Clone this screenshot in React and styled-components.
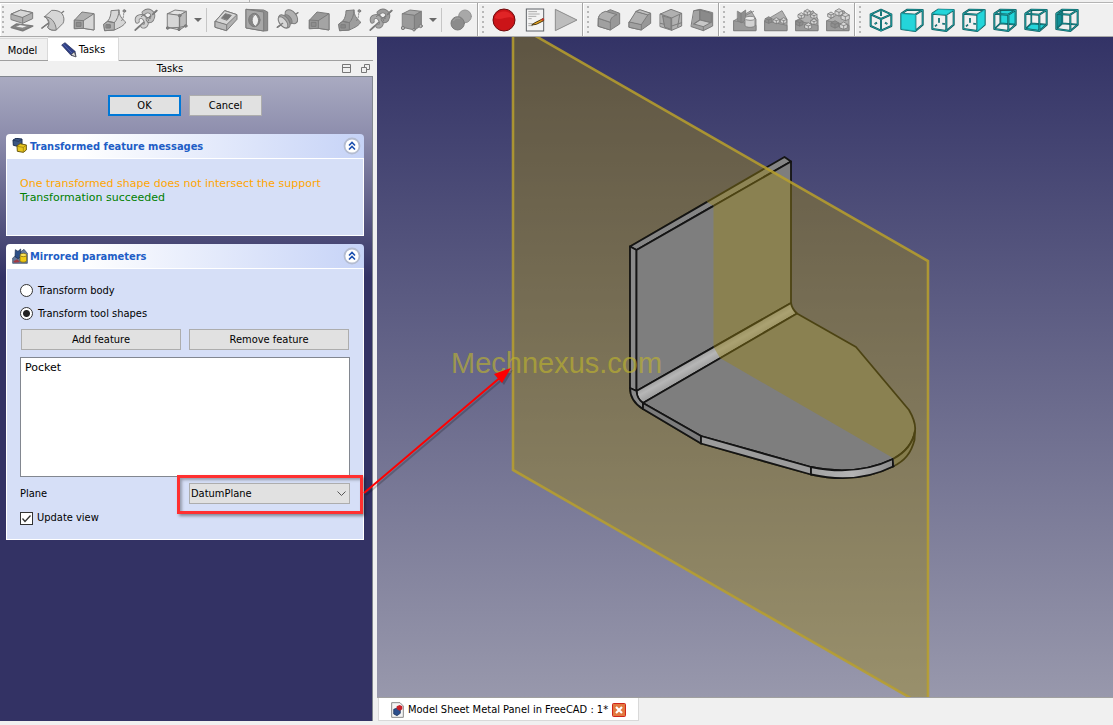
import React from "react";
import styled, { createGlobalStyle } from "styled-components";

const GlobalStyle = createGlobalStyle`
  *, *::before, *::after { box-sizing: border-box; }
  body {
    margin: 0;
    background: #f0f0f0;
    color: #000;
    font-family: "DejaVu Sans Condensed", "DejaVu Sans", sans-serif;
    font-size: 11px;
    line-height: 14px;
  }
  button, select, input { font: inherit; color: inherit; margin: 0; }
`;

const Window = styled.div`
  display: flex;
  flex-direction: column;
  height: 100vh;
  min-height: 600px;
  overflow: hidden;
`;

/* ---------- toolbar ---------- */

const MenuEdge = styled.div`
  height: 3px;
  border-bottom: 1px solid #b4b4b4;
  &::before {
    content: "";
    display: block;
    width: 250px;
    height: 2px;
    border-right: 1px solid #b4b4b4;
  }
`;

const Toolbar = styled.div`
  display: flex;
  height: 34px;
  flex: none;
  border-bottom: 1px solid #a9a9a9;
`;

const ToolGroup = styled.div`
  display: flex;
  align-items: center;
  flex: none;
  padding-right: 1px;
  border-right: 1px solid #a5a5a5;
  box-shadow: inset 1px 1px 0 #fff;
  &:last-child { border-right: 0; flex: 1; }
`;

const Handle = styled.div`
  flex: none;
  width: ${(p) => (p.$short ? 6 : 10)}px;
  height: 27px;
  background: repeating-linear-gradient(#b8b8b8 0 2px, transparent 2px 5px) center / 2px 100% no-repeat;
`;

const ToolButton = styled.button`
  display: flex;
  justify-content: center;
  align-items: center;
  width: 31px;
  height: 30px;
  padding: 0;
  border: 0;
  background: none;
`;

const MoreButton = styled(ToolButton)`
  width: 11px;
`;

const Divider = styled.div`
  width: 7px;
  height: 24px;
  background: linear-gradient(#c6c6c6, #c6c6c6) center / 1px 100% no-repeat;
`;

const G = { stroke: "#7c7c7c", strokeWidth: 3, strokeLinejoin: "round", strokeLinecap: "round" };
const LT = "#d6d6d6";
const MD = "#b0b0b0";
const DK = "#8e8e8e";

const P = ({ d, f = "none", ...rest }) => <path d={d} fill={f} {...rest} />;

const boxFaces = (top, left, right) => (
  <g {...G}>
    <P d="M8 17L30 6L64 10L44 22Z" f={top} />
    <P d="M8 17L44 22V66L8 58Z" f={left} />
    <P d="M44 22L64 10V52L44 66Z" f={right} />
  </g>
);

const helix = (a, b) => (
  <g {...G}>
    <P d="M4 66L68 8" strokeWidth="5" />
    <P d="M10 40C6 26 24 20 32 32C42 44 36 58 26 54" strokeWidth="14" />
    <P d="M10 40C6 26 24 20 32 32C42 44 36 58 26 54" stroke={a} strokeWidth="9" />
    <P d="M30 14C44 2 60 14 56 28C54 38 46 42 42 34" strokeWidth="14" />
    <P d="M30 14C44 2 60 14 56 28C54 38 46 42 42 34" stroke={b} strokeWidth="9" />
    <P d="M22 26C30 14 42 28 44 38" strokeWidth="3" />
    <P d="M4 66L16 55M56 19L68 8" strokeWidth="5" />
  </g>
);

const sweep = (a, b) => (
  <g {...G}>
    <P d="M3 48L14 40C22 30 24 18 24 8L48 6C48 22 56 32 68 42C64 52 52 58 34 66L6 68Z" f={a} />
    <P d="M3 48L14 40L34 44L34 66L6 68Z" f={b} />
    <P d="M34 44C42 36 48 22 48 6M14 40L34 44" />
    <P d="M10 50H22V60H10Z" f="#888" />
    <circle cx="64" cy="9" r="4" fill={DK} />
    <P d="M62 17C62 26 60 34 54 40" strokeDasharray="4 5" />
  </g>
);

const loft = (a, b, c) => (
  <g {...G}>
    <P d="M8 36L30 12L66 17V66L34 61L8 62Z" f={a} />
    <P d="M34 38L66 17V66L34 61Z" f={b} />
    <P d="M8 36L34 38V61L8 62Z" f={c} />
    <P d="M14 43H27V55H14Z" f={DK} />
  </g>
);

const ramp = (
  <g {...G} strokeWidth="2.5">
    <P d="M3 38L54 8L69 34V68H3Z" f={MD} />
    <P d="M3 38L69 52V68H3Z" f="#9a9a9a" />
  </g>
);

const cubelet = (x, y, s, f) => (
  <g {...G} strokeWidth="2.5" key={`${x}-${y}`}>
    <P d={`M${x} ${y + s * 0.3}L${x + s * 0.5} ${y}L${x + s} ${y + s * 0.3}V${y + s * 0.8}L${x + s * 0.5} ${y + s}L${x} ${y + s * 0.8}Z`} f={f} />
    <P d={`M${x} ${y + s * 0.3}L${x + s * 0.5} ${y + s * 0.5}L${x + s} ${y + s * 0.3}M${x + s * 0.5} ${y + s * 0.5}V${y + s}`} />
  </g>
);

const viewFaces = {
  front: "M4 17L46 20V69L4 63Z",
  top: "M4 17L22 4L68 6L46 20Z",
  right: "M46 20L68 6V50L46 69Z",
  rear: "M22 5L68 6V50L22 46Z",
  bottom: "M4 63L22 46L68 50L46 69Z",
  left: "M4 17L22 5V46L4 63Z",
};

const viewCube = (face) => {
  const behind = ["rear", "bottom", "left"].includes(face);
  const back = behind ? "M22 5V46L68 50M22 46L4 63" : "M24 30V44M18 50L12 55M34 47L42 48";
  const front = "M4 17L46 20V69L4 63ZM4 17L22 5L68 6L46 20M68 6V50L46 69";
  const fill = <path d={viewFaces[face]} fill={face === "left" ? "#128f96" : "#24d5da"} />;
  return (
    <g strokeLinejoin="round" fill="none">
      {behind && fill}
      <path d={back} stroke="#0c5a5c" strokeWidth="5" />
      <path d={back} stroke="#1fa9ae" strokeWidth="1.5" />
      {!behind && fill}
      <path d={front} stroke="#0c5456" strokeWidth="6" />
      <path d={front} stroke="#28b9be" strokeWidth="2" />
      {["front", "top", "right"].includes(face) && (
        <path d={viewFaces[face]} fill="#24d5da" stroke="#1aa2a8" strokeWidth="2" />
      )}
    </g>
  );
};

const glyphs = {
  pad: (
    <g {...G}>
      <P d="M4 58L20 48L68 54L38 68Z" f={DK} strokeWidth="5" />
      <P d="M16 56L30 50L54 54L38 60Z" f="#eee" strokeWidth="2" />
      <P d="M4 18L32 6L68 14V32L38 46L4 35Z" f={MD} />
      <P d="M4 18L32 6L68 14L38 28Z" f={LT} />
      <P d="M38 28V46" />
    </g>
  ),
  revolve: (
    <g {...G}>
      <P d="M3 60L22 46M56 20L68 10" strokeWidth="4" />
      <P d="M11 26L32 7C46 6 58 10 64 18C70 28 70 38 66 46L46 66C34 68 24 66 20 58C26 46 22 34 11 26Z" f={LT} />
      <P d="M11 26C24 32 28 46 20 58C26 66 36 68 46 66C44 42 30 26 11 26Z" f="#c2c2c2" />
      <P d="M3 60L22 46" strokeWidth="4" />
    </g>
  ),
  loft: loft(MD, LT, "#a4a4a4"),
  sweep: sweep(LT, MD),
  helix: helix("#d0d0d0", "#bdbdbd"),
  box: (
    <g>
      {boxFaces("#e2e2e2", LT, "#bcbcbc")}
      <g {...G} fill="#808080">
        <path d="M44 22V58L8 60M44 58L62 54" fill="none" />
        <circle cx="44" cy="23" r="4" /><circle cx="8" cy="60" r="4" /><circle cx="62" cy="54" r="4" /><circle cx="42" cy="64" r="4" />
      </g>
    </g>
  ),
  pocket: (
    <g {...G}>
      <P d="M4 40L32 8L69 20V34L38 68L4 58Z" f={MD} />
      <P d="M4 40L32 8L69 20L38 50Z" f={LT} />
      <P d="M4 40L38 50V68L4 58Z" f="#bbb" />
      <P d="M23 30L34 17L52 22L40 36Z" f="#777" />
    </g>
  ),
  hole: (
    <g {...G}>
      <P d="M4 4L56 6L68 12V68L56 69L4 60Z" f={DK} />
      <P d="M4 4L56 12V69L4 60Z" f="#a8a8a8" />
      <ellipse cx="28" cy="36" rx="17" ry="20" fill="#858585" />
      <P d="M31 19C44 28 44 46 31 55C18 48 18 26 31 19Z" f="#ededed" />
    </g>
  ),
  groove: (
    <g {...G}>
      <P d="M4 58L66 14" strokeWidth="4" />
      <ellipse cx="46" cy="26" rx="15" ry="24" transform="rotate(-38 46 26)" fill={MD} />
      <ellipse cx="36" cy="34" rx="9" ry="16" transform="rotate(-38 36 34)" fill={DK} />
      <ellipse cx="25" cy="40" rx="13" ry="23" transform="rotate(-38 25 40)" fill="#a6a6a6" />
      <ellipse cx="21" cy="43" rx="10" ry="20" transform="rotate(-38 21 43)" fill={LT} />
      <P d="M4 58L20 46" strokeWidth="4" />
    </g>
  ),
  subLoft: loft("#999", "#a4a4a4", "#989898"),
  subSweep: sweep("#9d9d9d", "#949494"),
  subHelix: helix("#a6a6a6", "#9b9b9b"),
  subBox: (
    <g>
      {boxFaces("#a6a6a6", "#9a9a9a", "#8c8c8c")}
      <g {...G} fill="#b5b5b5">
        <circle cx="9" cy="60" r="5" /><circle cx="62" cy="54" r="5" /><circle cx="42" cy="65" r="4" />
      </g>
    </g>
  ),
  boolean: (
    <g {...G}>
      <circle cx="48" cy="25" r="19" fill="#a8a8a8" stroke="#959595" />
      <circle cx="26" cy="46" r="20" fill="#8c8c8c" />
      <P d="M14 38C18 30 26 29 32 31" stroke="#a6a6a6" />
    </g>
  ),
  record: (
    <g>
      <circle cx="36" cy="36" r="33" fill="#cb1418" stroke="#6e0a0c" strokeWidth="3" />
      <path d="M8 30C14 4 58 4 64 30C44 22 28 40 8 30Z" fill="#e02426" />
    </g>
  ),
  macro: (
    <g>
      <rect x="10" y="3" width="52" height="66" fill="#f3f3f3" stroke="#5f6368" strokeWidth="3" />
      <path d="M16 11H42M16 18H50M16 25H40M16 32H26M16 47H36M16 53H30" stroke="#aaa" strokeWidth="3" />
      <path d="M60 32L36 44L26 51L40 49L62 38Z" fill="#f0a91e" stroke="#4c3a10" strokeWidth="3" />
      <path d="M54 34L62 30L64 35L57 39Z" fill="#c2342c" />
    </g>
  ),
  play: <P d="M4 4L69 36L4 68Z" f="#bdbdbd" stroke="#8c8c8c" strokeWidth="3" />,
  fillet: (
    <g {...G}>
      <P d="M4 32C6 18 16 14 30 10L40 5L68 16V48L40 66L4 55Z" f="#989898" />
      <P d="M4 32C6 18 14 14 26 10L60 20C44 26 40 32 40 44Z" f={MD} />
      <P d="M40 44V66L4 55V32Z" f="#a0a0a0" />
    </g>
  ),
  chamfer: (
    <g {...G}>
      <P d="M4 42L32 6L68 16V46L40 66L4 58Z" f="#989898" />
      <P d="M4 42L24 10L60 20L40 50Z" f={MD} />
      <P d="M24 10L36 5L68 16L60 20Z" f="#c0c0c0" />
      <P d="M4 42L40 50V66L4 58Z" f="#a0a0a0" />
    </g>
  ),
  draft: (
    <g {...G}>
      <P d="M4 18L36 4L68 16V54L38 67L4 56Z" f={MD} />
      <P d="M4 18L38 30L68 16M38 30V67M12 22L18 56M62 20L56 56M4 46L38 54L68 44" />
      <P d="M12 24L36 31V64L18 58Z" f="#979797" />
    </g>
  ),
  thickness: (
    <g {...G}>
      <P d="M12 8L30 4L68 14V54L40 68L4 56Z" f="#a3a3a3" />
      <P d="M30 6L64 16V44L30 36Z" f="#8a8a8a" />
      <P d="M30 36L62 44L40 56L12 48Z" f="#c8c8c8" />
      <P d="M12 8L30 6V36L12 48M40 56V68" />
    </g>
  ),
  mirror: (
    <g>
      {ramp}
      <g {...G} strokeWidth="2.5">
        <P d="M14 10L24 16L38 6V36L26 44L14 38Z" f={DK} />
        <P d="M24 16V44M38 22L62 10" />
        <P d="M36 32V52C36 60 66 60 66 52V32Z" f="#d2d2d2" />
        <ellipse cx="51" cy="31" rx="15" ry="6" fill="#ececec" />
      </g>
    </g>
  ),
  linear: <g>{ramp}{cubelet(4, 26, 20, DK)}{cubelet(28, 29, 18, LT)}{cubelet(50, 29, 18, LT)}</g>,
  polar: (
    <g>{ramp}{cubelet(28, 4, 18, LT)}{cubelet(48, 14, 18, LT)}{cubelet(10, 14, 18, LT)}{cubelet(48, 32, 18, LT)}{cubelet(4, 34, 20, DK)}{cubelet(30, 44, 20, LT)}</g>
  ),
  multi: (
    <g>{ramp}{cubelet(28, 2, 22, LT)}{cubelet(6, 12, 18, LT)}{cubelet(46, 14, 24, LT)}{cubelet(16, 38, 22, DK)}{cubelet(42, 42, 22, LT)}</g>
  ),
  iso: (
    <g fill="none" strokeLinejoin="round">
      {[["#0c5456", 6], ["#28b9be", 2]].map(([c, w]) => (
        <path key={c} d="M36 5L67 19V54L36 68L5 54V19ZM5 19L36 33L67 19M36 33V68M36 10V24M17 48L24 44M55 48L48 44" stroke={c} strokeWidth={w} />
      ))}
    </g>
  ),
  front: viewCube("front"),
  top: viewCube("top"),
  right: viewCube("right"),
  rear: viewCube("rear"),
  bottom: viewCube("bottom"),
  left: viewCube("left"),
};

const Tool = ({ name }) => (
  <ToolButton type="button" aria-label={name}>
    <svg width="24" height="24" viewBox="0 0 72 72" aria-hidden="true">{glyphs[name]}</svg>
  </ToolButton>
);

const More = () => (
  <MoreButton type="button" aria-label="More">
    <svg width="8" height="4" viewBox="0 0 8 4" aria-hidden="true"><path d="M0 0H8L4 4Z" fill="#6a6a6a" /></svg>
  </MoreButton>
);

const tools = (names) => names.map((n) => <Tool key={n} name={n} />);

/* ---------- dock ---------- */

const Body = styled.div`
  display: flex;
  flex: 1;
  min-height: 0;
  gap: 4px;
  padding-bottom: 4px;
`;

const Dock = styled.aside`
  position: relative;
  z-index: 1;
  display: flex;
  flex-direction: column;
  flex: none;
  width: 373px;
`;

const DockTabs = styled.div`
  display: flex;
  align-items: flex-end;
  height: 24px;
  border-bottom: 1px solid #a0a0a0;
`;

const DockTab = styled.button`
  display: flex;
  align-items: center;
  justify-content: center;
  gap: 2px;
  width: ${(p) => (p.$active ? 71 : 48)}px;
  height: ${(p) => (p.$active ? 24 : 22)}px;
  margin-bottom: ${(p) => (p.$active ? -1 : 0)}px;
  padding: ${(p) => (p.$active ? "0" : "2px 2px 0 0")};
  border: 1px solid #d9d9d9;
  border-width: 1px 1px 0 0;
  background: ${(p) => (p.$active ? "#fff" : "#f0f0f0")};
`;

const DockTitle = styled.div`
  display: flex;
  align-items: center;
  height: 16px;
  padding-right: 3px;
  border-bottom: 1px solid #828790;
  background: #f0f0f0;
`;

const TitleText = styled.span`
  flex: 1;
  padding-left: 8px;
  text-align: center;
`;

const TitleButton = styled.button`
  display: flex;
  width: 19px;
  padding: 0;
  justify-content: flex-end;
  border: 0;
  background: none;
`;

const Panel = styled.form`
  flex: 1;
  display: flex;
  flex-direction: column;
  gap: 8px;
  padding: 18px 8px 8px 6px;
  border-right: 1px solid #828790;
  background: linear-gradient(#a9aac1 0, #8c8cac 60px, #333264 200px);
`;

const Actions = styled.div`
  display: flex;
  justify-content: center;
  gap: 8px;
  padding-bottom: 10px;
`;

const Button = styled.button`
  height: 21px;
  min-width: 73px;
  padding: 0 4px;
  border: ${(p) => (p.$primary ? "2px solid #0078d7" : "1px solid #adadad")};
  background: #e1e1e1;
  line-height: 14px;
`;

const Section = styled.section`
  border-radius: 4px 4px 0 0;
`;

const SectionHead = styled.header`
  display: flex;
  align-items: center;
  gap: 2px;
  height: 24px;
  padding: 0 3px 0 6px;
  border-radius: 4px 4px 0 0;
  background: linear-gradient(90deg, #fff 20%, #c6d3f7);
`;

const SectionTitle = styled.h2`
  flex: 1;
  margin: 0;
  padding-top: 2px;
  color: #215dc6;
  font-size: 11px;
  line-height: 16px;
`;

const Collapse = styled.button`
  display: flex;
  padding: 0;
  border: 0;
  background: none;
`;

const SectionBody = styled.div`
  padding: 0 13px;
  border: 1px solid #fff;
  background: #d6dff7;
`;

const Messages = styled.div`
  height: 76px;
  padding-top: 18px;
  font-family: "DejaVu Sans", sans-serif;
`;

const Message = styled.p`
  margin: 0;
  color: ${(p) => p.$color};
`;

const Fields = styled.div`
  display: flex;
  flex-direction: column;
  padding: 10px 0 7px;
`;

const Choice = styled.label`
  display: flex;
  align-items: center;
  gap: ${(p) => p.$gap || 5}px;
  height: ${(p) => p.$height || 23}px;
`;

const Radio = styled.input`
  appearance: none;
  width: 13px;
  height: 13px;
  border: 1px solid #333;
  border-radius: 50%;
  background: #fff;
  &:checked { background: radial-gradient(circle, #222 3px, #fff 4px); }
`;

const CheckWrap = styled.span`
  display: grid;
  > * { grid-area: 1 / 1; }
`;

const Check = styled.input`
  appearance: none;
  width: 13px;
  height: 13px;
  border: 1px solid #333;
  background: #fff;
`;

const Pair = styled.div`
  display: grid;
  grid-template-columns: 1fr 1fr;
  gap: 8px;
  align-items: center;
`;

const ButtonPair = styled(Pair)`
  padding: 4px 1px 7px;
`;

const FeatureList = styled.ul`
  height: 120px;
  margin: 0 0 6px;
  padding: 3px 4px;
  border: 1px solid #828790;
  background: #fff;
  list-style: none;
  font-family: "DejaVu Sans", sans-serif;
`;

const SelectWrap = styled.div`
  position: relative;
  display: grid;
  align-items: center;
  > select, > svg.chevron { grid-area: 1 / 1; }
  > svg.chevron { justify-self: end; margin-right: 4px; pointer-events: none; }
`;

const Select = styled.select`
  appearance: none;
  height: 21px;
  padding: 0 1px;
  border: 1px solid #adadad;
  border-radius: 0;
  background: #e1e1e1;
`;

const Highlight = styled.div`
  position: absolute;
  inset: -8px -13px -10px -12px;
  border: 3px solid #ff3030;
  box-shadow: 2px 2px 3px rgba(0, 0, 0, 0.4), inset 2px 2px 3px rgba(0, 0, 0, 0.3);
  pointer-events: none;
`;

const Pointer = styled.svg`
  position: absolute;
  left: calc(100% + 10px);
  bottom: 6px;
  pointer-events: none;
`;

const CollapseIcon = () => (
  <svg width="18" height="18" viewBox="0 0 18 18" fill="none" aria-hidden="true">
    <circle cx="9" cy="9" r="7.5" fill="#fff" stroke="#b4bcd0" strokeWidth="1.8" />
    <path d="M6 8.5L9 5.5L12 8.5M6 12.5L9 9.5L12 12.5" stroke="#1c50b0" strokeWidth="1.6" />
  </svg>
);

const FeatureIcon = () => (
  <svg width="16" height="16" viewBox="0 0 48 48" aria-hidden="true">
    <path d="M3 6L12 1L30 3V20L22 26L4 22Z" fill="#3c5682" stroke="#1c2f52" strokeWidth="3" />
    <path d="M4 7L20 10L30 4" stroke="#1c2f52" strokeWidth="2" fill="none" />
    <path d="M15 24L24 17L43 21V36L34 43L16 40Z" fill="#e8c51c" stroke="#6c5a0c" strokeWidth="3" />
    <path d="M15 25L34 28L43 21M34 28V43" stroke="#8c740c" strokeWidth="2" fill="none" />
  </svg>
);

const MirrorIcon = () => (
  <svg width="16" height="16" viewBox="0 0 48 48" aria-hidden="true">
    <path d="M2 30L36 4L46 16V46H2Z" fill="#64799c" stroke="#33445f" strokeWidth="2" />
    <path d="M4 40L16 34L24 42L8 44Z" fill="#a33a42" />
    <path d="M10 5L18 10L26 3V26L18 32L9 26Z" fill="#2c4f86" stroke="#182c4e" strokeWidth="2" />
    <path d="M24 22V38C26 44 42 44 44 38V22Z" fill="#f0ca14" stroke="#6c5a0c" strokeWidth="2" />
    <ellipse cx="34" cy="21" rx="10" ry="5" fill="#fbe258" stroke="#6c5a0c" strokeWidth="2" />
  </svg>
);

/* ---------- 3D view ---------- */

const Main = styled.main`
  display: flex;
  flex-direction: column;
  flex: 1;
  min-width: 0;
`;

const Viewport = styled.div`
  position: relative;
  flex: 1;
  min-height: 0;
  overflow: hidden;
  background: linear-gradient(#333366, #9898ac);
  border-bottom: 1px solid #a0a0a0;
  > svg { display: block; width: 100%; height: 100%; }
`;

const Watermark = styled.div`
  position: absolute;
  left: 74px;
  top: 309px;
  color: rgba(190, 180, 45, 0.65);
  font-family: "Liberation Sans", Arial, sans-serif;
  font-size: 29px;
  line-height: 34px;
`;

const DocTabs = styled.div`
  display: flex;
  height: 23px;
  padding-left: 1px;
`;

const DocTab = styled.div`
  display: flex;
  align-items: center;
  gap: 4px;
  padding: 2px 12px 0;
  border: 1px solid #d9d9d9;
  border-top: 0;
  background: #fff;
`;

const CloseButton = styled.button`
  display: flex;
  padding: 0;
  border: 0;
  background: none;
`;

const Scene = () => (
  <svg viewBox="377 37 736 660" preserveAspectRatio="xMinYMin slice" role="img" aria-label="Sheet metal part with datum plane">
    <defs>
      <linearGradient id="bend" gradientUnits="userSpaceOnUse" x1="710" y1="345" x2="719" y2="361">
        <stop offset="0" stopColor="#909090" />
        <stop offset="0.5" stopColor="#b6b6b6" />
        <stop offset="1" stopColor="#9a9a9a" />
      </linearGradient>
      <linearGradient id="rim" x1="0" x2="1">
        <stop offset="0" stopColor="#a2a2a2" />
        <stop offset="0.5" stopColor="#b4b4b4" />
        <stop offset="1" stopColor="#8c8c8c" />
      </linearGradient>
      <clipPath id="front">
        <path d="M600 180H700L707 202L713.5 206V347L720 358L893 458L895 468V500H600Z" />
      </clipPath>
      <g id="part" stroke="#141414" strokeWidth="1.8" strokeLinejoin="round">
        <path d="M630 246.500L784.500 157L791 161.500L636.500 250Z" fill="#858585" />
        <path d="M630 246.500L636.500 250V391L630 388Z" fill="#8a8a8a" />
        <path d="M636.500 250L791 161.500V303L636.500 391Z" fill="#7e7e7e" />
        <path d="M636.500 391L791 303Q792 309 797 313.500L643 403Q637 399 636.500 391Z" fill="url(#bend)" />
        <path d="M630 388L636.500 391Q637 399 643 403V409Q630 401 630 388Z" fill="#8a8a8a" />
        <path d="M643 403L797 313.500L856 347L909 410C913 417 916 424 915 431C913 443 906 452 893 459C868 471 840 473 811 467L701 436Z" fill="#7e7e7e" />
        <path d="M643 403L701 436V443.500L643 409Z" fill="#7c7c7c" />
        <path d="M701 436L811 467V474.500L701 443.500Z" fill="#9c9c9c" />
        <path d="M811 467C840 473 868 471 893 459V466.500C868 479 840 481 811 474.500Z" fill="url(#rim)" />
        <path d="M893 459C906 452 913 443 915 431L914.500 440C911 453 905 461 893 466.500Z" fill="#777" />
      </g>
    </defs>
    <use href="#part" />
    <path d="M513 23L928 261V708L513 470Z" fill="rgb(155,133,18)" fillOpacity="0.42" />
    <path d="M513 23L928 261V708L513 470Z" fill="none" stroke="#b8a02c" strokeOpacity="0.85" strokeWidth="2.6" />
    <use href="#part" clipPath="url(#front)" />
  </svg>
);

export default function App() {
  return (
    <Window>
      <GlobalStyle />
      <MenuEdge />
      <Toolbar>
        <ToolGroup>
          <Handle $short />
          {tools(["pad", "revolve", "loft", "sweep", "helix", "box"])}
          <More />
          <Divider />
          {tools(["pocket", "hole", "groove", "subLoft", "subSweep", "subHelix", "subBox"])}
          <More />
          <Divider />
          {tools(["boolean"])}
        </ToolGroup>
        <ToolGroup><Handle />{tools(["record", "macro", "play"])}</ToolGroup>
        <ToolGroup><Handle />{tools(["fillet", "chamfer", "draft", "thickness"])}</ToolGroup>
        <ToolGroup><Handle />{tools(["mirror", "linear", "polar", "multi"])}</ToolGroup>
        <ToolGroup><Handle />{tools(["iso", "front", "top", "right", "rear", "bottom", "left"])}</ToolGroup>
      </Toolbar>
      <Body>
        <Dock>
          <DockTabs>
            <DockTab type="button">Model</DockTab>
            <DockTab type="button" $active>
              <svg width="16" height="16" viewBox="0 0 48 48" aria-hidden="true">
                <path d="M2 9L12 2L42 28L45 44L30 40Z" fill="#2f3f86" stroke="#1c2450" strokeWidth="2" />
                <path d="M7 6L34 34" stroke="#5568ac" strokeWidth="3" />
                <path d="M30 38L40 30L45 45Z" fill="#ddd" stroke="#444" strokeWidth="2" />
              </svg>
              Tasks
            </DockTab>
          </DockTabs>
          <DockTitle>
            <TitleText>Tasks</TitleText>
            <TitleButton type="button" aria-label="Collapse">
              <svg width="9" height="9" viewBox="0 0 9 9" fill="none" stroke="#777"><path d="M.5 .5H8.500V8.500H.5ZM.5 3.500H8.500" /></svg>
            </TitleButton>
            <TitleButton type="button" aria-label="Float">
              <svg width="9" height="9" viewBox="0 0 9 9" fill="none" stroke="#777"><path d="M3.500 3V.5H8.500V5.500H6M.5 3.500H5.500V8.500H.5Z" /></svg>
            </TitleButton>
          </DockTitle>
          <Panel onSubmit={(e) => e.preventDefault()}>
            <Actions>
              <Button type="submit" $primary>OK</Button>
              <Button type="button">Cancel</Button>
            </Actions>
            <Section>
              <SectionHead>
                <FeatureIcon />
                <SectionTitle>Transformed feature messages</SectionTitle>
                <Collapse type="button" aria-label="Collapse messages"><CollapseIcon /></Collapse>
              </SectionHead>
              <SectionBody>
                <Messages>
                  <Message $color="#ffa500">One transformed shape does not intersect the support</Message>
                  <Message $color="#008000">Transformation succeeded</Message>
                </Messages>
              </SectionBody>
            </Section>
            <Section>
              <SectionHead>
                <MirrorIcon />
                <SectionTitle>Mirrored parameters</SectionTitle>
                <Collapse type="button" aria-label="Collapse parameters"><CollapseIcon /></Collapse>
              </SectionHead>
              <SectionBody>
                <Fields>
                  <Choice><Radio type="radio" name="mode" />Transform body</Choice>
                  <Choice><Radio type="radio" name="mode" defaultChecked />Transform tool shapes</Choice>
                  <ButtonPair>
                    <Button type="button">Add feature</Button>
                    <Button type="button">Remove feature</Button>
                  </ButtonPair>
                  <FeatureList>
                    <li>Pocket</li>
                  </FeatureList>
                  <Pair>
                    <label htmlFor="plane">Plane</label>
                    <SelectWrap>
                      <Select id="plane" defaultValue="DatumPlane"><option>DatumPlane</option></Select>
                      <svg className="chevron" width="9" height="6" viewBox="0 0 9 6" fill="none" stroke="#555" aria-hidden="true"><path d="M.5 .5L4.500 4.500L8.500 .5" /></svg>
                      <Highlight />
                      <Pointer width="160" height="136" viewBox="0 0 160 136" aria-hidden="true">
                        <g transform="translate(2 2)" opacity="0.2"><path d="M4 131L142 14" stroke="#000" strokeWidth="2" /><path d="M151 6L142 21L134 12Z" /></g>
                        <path d="M4 131L142 14" stroke="#f00" strokeWidth="2" />
                        <path d="M151 6L142 21L134 12Z" fill="#f00" />
                      </Pointer>
                    </SelectWrap>
                  </Pair>
                  <Choice $gap={4} $height={28}>
                    <CheckWrap>
                      <Check type="checkbox" defaultChecked />
                      <svg width="13" height="13" viewBox="0 0 13 13" fill="none" stroke="#333" strokeWidth="1.3" aria-hidden="true"><path d="M2.500 6.500L5 9.500L10.500 3.500" /></svg>
                    </CheckWrap>
                    Update view
                  </Choice>
                </Fields>
              </SectionBody>
            </Section>
          </Panel>
        </Dock>
        <Main>
          <Viewport>
            <Scene />
            <Watermark>Mechnexus.com</Watermark>
          </Viewport>
          <DocTabs>
            <DocTab>
              <svg width="13" height="16" viewBox="0 0 39 48" aria-hidden="true">
                <path d="M2 2H27L37 12V46H2Z" fill="#f4f4f4" stroke="#8a8a8a" strokeWidth="3" />
                <path d="M8 22L18 18L28 23V34L18 41L8 36Z" fill="#2c4f8c" stroke="#152a50" strokeWidth="2" />
                <path d="M17 13L26 9L34 13V22L26 26L17 21Z" fill="#c8202a" />
              </svg>
              <span>Model Sheet Metal Panel in FreeCAD : 1*</span>
              <CloseButton type="button" aria-label="Close">
                <svg width="14" height="14" viewBox="0 0 14 14" aria-hidden="true">
                  <rect x=".5" y=".5" width="13" height="13" rx="1" fill="#e2793f" stroke="#d0241c" />
                  <path d="M4 4L10 10M10 4L4 10" stroke="#fff" strokeWidth="2.2" />
                </svg>
              </CloseButton>
            </DocTab>
          </DocTabs>
        </Main>
      </Body>
    </Window>
  );
}
